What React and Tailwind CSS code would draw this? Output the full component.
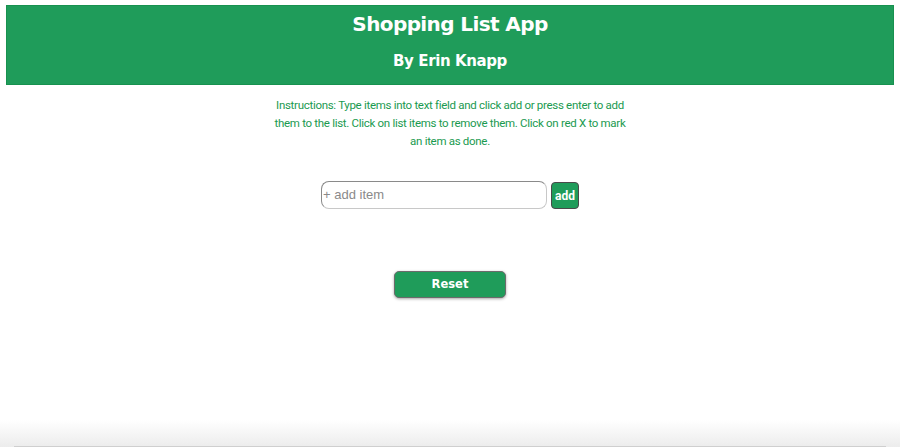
import React, { useState } from 'react';

// Shopping list page: green header, instructions, add field and reset button
export default function App() {
    const [items, setItems] = useState([]);
    const [text, setText] = useState('');

    const addItem = () => {
        if (!text.trim()) return;
        setItems([...items, { name: text, done: false }]);
        setText('');
    };

    return (
        <div className="h-[447px] flex flex-col bg-white overflow-hidden">
            <div className="flex-1 pt-[5px] px-[6px]">
                {/* Header */}
                <header className="h-[80px] bg-[#1f9c5a] border border-[#17914f] flex flex-col items-center text-white font-['DejaVu_Sans',sans-serif] font-bold">
                    <h1 className="text-[20px] leading-[30px] mt-[3px] tracking-[-0.6px]">Shopping List App</h1>
                    <h2 className="text-[15px] leading-[20px] mt-[12px] tracking-[-0.4px]">By Erin Knapp</h2>
                </header>

                {/* Instructions */}
                <p className="mx-auto mt-[11px] text-center text-[11.5px] leading-[18px] tracking-[-0.3px] text-[#1a9a50] font-['Roboto',sans-serif] whitespace-nowrap">
                    Instructions: Type items into text field and click add or press enter to add<br />
                    them to the list. Click on list items to remove them. Click on red X to mark<br />
                    an item as done.
                </p>

                {/* Add item */}
                <div className="flex justify-center items-center gap-[4px] mt-[30px]">
                    <input
                        value={text}
                        onChange={(e) => setText(e.target.value)}
                        onKeyDown={(e) => e.key === 'Enter' && addItem()}
                        placeholder="+ add item"
                        className="w-[226px] h-[28px] rounded-[8px] border border-[#c8c8c8] border-l-[#8a8a8a] border-t-[#8a8a8a] px-[1px] text-[13px] font-['Liberation_Sans',sans-serif] placeholder:text-[#8a8a8a] outline-none"
                    />
                    <button
                        onClick={addItem}
                        className="w-[28px] h-[27px] mt-[2px] rounded-[4px] bg-[#1f9c5a] border border-[#4a4a4a] text-white text-[12px] font-bold font-['Roboto',sans-serif]"
                    >
                        add
                    </button>
                </div>

                <ul className="flex flex-col items-center">
                    {items.map((item, i) => (
                        <li key={i} className="text-[#1f9c5a] text-sm">{item.name}</li>
                    ))}
                </ul>

                {/* Reset */}
                <div className="flex justify-center mt-[62px]">
                    <button
                        onClick={() => setItems([])}
                        className="w-[112px] h-[27px] rounded-[5px] bg-[#1f9c5a] border border-[#6b6b6b] shadow-[0_1px_3px_rgba(0,0,0,0.35)] text-white text-[11.5px] font-bold font-['DejaVu_Sans',sans-serif]"
                    >
                        Reset
                    </button>
                </div>
            </div>

            {/* Bottom shade */}
            <div className="h-[27px] bg-gradient-to-b from-white to-[#ececec] flex items-end px-[14px]">
                <div className="h-px w-full bg-[#cfcfcf]" />
            </div>
        </div>
    );
}
